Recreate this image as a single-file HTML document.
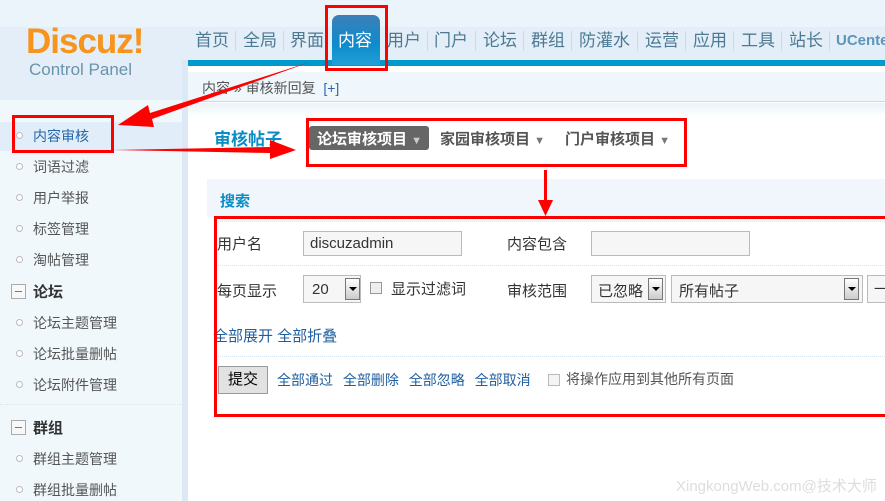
<!DOCTYPE html>
<html><head><meta charset="utf-8"><style>
*{margin:0;padding:0;box-sizing:border-box}
body{width:885px;height:501px;overflow:hidden;position:relative;background:#fff;font-family:"Liberation Sans","Noto Sans CJK SC",sans-serif;font-size:14px;color:#333}
.a{position:absolute;white-space:nowrap}
.nav{top:29px;font-size:17px;color:#4d7a92;height:24px;line-height:24px}
.sep{position:absolute;top:31px;width:1px;height:20px;background:#c8dbe6}
.si{position:absolute;left:33px;font-size:14px;color:#555}
.dot{position:absolute;left:16px;width:7px;height:7px;border:1px solid #bbb;border-radius:50%;background:#fff}
.hd{position:absolute;left:11px;width:15px;height:15px;border:1px solid #aaa;background:#f8f8f8}
.hd:after{content:"";position:absolute;left:3px;top:6px;width:7px;height:1px;background:#777}
.lk{color:#1f5fa0}
.inp{position:absolute;border:1px solid #bbb;background:#f6f6f6;height:25px}
.dd{position:absolute;width:15px;height:20px;border:1px solid #777;background:linear-gradient(#fff,#ccc);top:2px}
.dd:after{content:"";position:absolute;left:3px;top:8px;border:4px solid transparent;border-top:4px solid #000}
.red{position:absolute;border:3px solid #f00}
</style></head><body>
<!-- header -->
<div class="a" style="left:0;top:0;width:885px;height:60px;background:#ecf4fb"></div>
<div class="a" style="left:0;top:27px;width:885px;height:33px;background:#e3eef8"></div>
<div class="a" style="left:0;top:60px;width:182px;height:40px;background:#e3eef8"></div>
<div class="a" style="left:26px;top:22px;font-size:35px;font-weight:bold;color:#f7941d;letter-spacing:-1px">Discuz!</div>
<div class="a" style="left:29px;top:60px;font-size:17px;color:#6a94ab">Control Panel</div>
<div class="a" style="left:188px;top:60px;width:697px;height:6px;background:#0099cc"></div>
<div class="a" style="left:332px;top:15px;width:48px;height:50px;border-radius:7px 7px 0 0;background:linear-gradient(#3c80b8,#0d8bcb 60%,#22a0d8)"></div>
<div class="a nav" style="left:338px;color:#fff">内容</div>
<div class="a nav" style="left:195px">首页</div><div class="sep" style="left:235px"></div>
<div class="a nav" style="left:243px">全局</div><div class="sep" style="left:283px"></div>
<div class="a nav" style="left:290px">界面</div>
<div class="a nav" style="left:387px">用户</div><div class="sep" style="left:427px"></div>
<div class="a nav" style="left:434px">门户</div><div class="sep" style="left:475px"></div>
<div class="a nav" style="left:483px">论坛</div><div class="sep" style="left:523px"></div>
<div class="a nav" style="left:531px">群组</div><div class="sep" style="left:571px"></div>
<div class="a nav" style="left:579px">防灌水</div><div class="sep" style="left:637px"></div>
<div class="a nav" style="left:645px">运营</div><div class="sep" style="left:685px"></div>
<div class="a nav" style="left:693px">应用</div><div class="sep" style="left:733px"></div>
<div class="a nav" style="left:741px">工具</div><div class="sep" style="left:781px"></div>
<div class="a nav" style="left:789px">站长</div><div class="sep" style="left:829px"></div>
<div class="a nav" style="left:836px;font-size:15px;font-weight:bold;color:#5d95b8">UCenter</div>
<!-- breadcrumb -->
<div class="a" style="left:188px;top:72px;width:697px;height:30px;background:#f0f7fc;border-bottom:1px solid #c6d8e2"></div>
<div class="a" style="left:188px;top:103px;width:697px;height:14px;background:linear-gradient(#eaf2f8,#fff)"></div>
<div class="a" style="left:202px;top:78px;font-size:14px;color:#555">内容 » 审核新回复 &nbsp;<span style="color:#2a67b1">[+]</span></div>
<!-- sidebar -->
<div class="a" style="left:0;top:100px;width:182px;height:401px;background:#f1f8fc"></div>
<div class="a" style="left:182px;top:60px;width:6px;height:441px;background:#dce9f5"></div>
<div class="a" style="left:0;top:122px;width:182px;height:29px;background:#e1eef9"></div>
<div class="dot" style="top:132px"></div><div class="si" style="top:126px;color:#2466a8">内容审核</div>
<div class="dot" style="top:163px"></div><div class="si" style="top:157px">词语过滤</div>
<div class="dot" style="top:194px"></div><div class="si" style="top:188px">用户举报</div>
<div class="dot" style="top:225px"></div><div class="si" style="top:219px">标签管理</div>
<div class="dot" style="top:256px"></div><div class="si" style="top:250px">淘帖管理</div>
<div class="hd" style="top:284px"></div><div class="si" style="top:281px;font-weight:bold;font-size:15px;color:#333">论坛</div>
<div class="dot" style="top:319px"></div><div class="si" style="top:313px">论坛主题管理</div>
<div class="dot" style="top:350px"></div><div class="si" style="top:344px">论坛批量删帖</div>
<div class="dot" style="top:381px"></div><div class="si" style="top:375px">论坛附件管理</div>
<div class="a" style="left:0;top:404px;width:182px;border-top:1px dotted #d5e5f0"></div>
<div class="hd" style="top:420px"></div><div class="si" style="top:417px;font-weight:bold;font-size:15px;color:#333">群组</div>
<div class="dot" style="top:455px"></div><div class="si" style="top:449px">群组主题管理</div>
<div class="dot" style="top:486px"></div><div class="si" style="top:480px">群组批量删帖</div>
<!-- title & tabs -->
<div class="a" style="left:214px;top:125px;font-size:17px;font-weight:bold;color:#0a8cc4">审核帖子</div>
<div class="a" style="left:309px;top:126px;width:120px;height:24px;background:#666;border-radius:3px"></div>
<div class="a" style="left:317px;top:128px;font-size:15px;font-weight:bold;color:#fff">论坛审核项目 <span style="font-size:11px;color:#ccc">▼</span></div>
<div class="a" style="left:440px;top:128px;font-size:15px;font-weight:bold;color:#555">家园审核项目 <span style="font-size:11px;color:#777">▼</span></div>
<div class="a" style="left:565px;top:128px;font-size:15px;font-weight:bold;color:#555">门户审核项目 <span style="font-size:11px;color:#777">▼</span></div>
<!-- search -->
<div class="a" style="left:207px;top:179px;width:678px;height:38px;background:#f0f6fc"></div>
<div class="a" style="left:220px;top:190px;font-size:15px;font-weight:bold;color:#0a8cc4">搜索</div>
<div class="a" style="left:216px;top:221px;width:669px;border-top:1px dotted #d3e6f2"></div>
<div class="a" style="left:216px;top:265px;width:669px;border-top:1px dotted #d3e6f2"></div>
<div class="a" style="left:216px;top:356px;width:669px;border-top:1px dotted #d3e6f2"></div>
<div class="a" style="left:217px;top:233px;font-size:15px">用户名</div>
<div class="inp" style="left:303px;top:231px;width:159px"></div>
<div class="a" style="left:310px;top:235px;font-size:15px;color:#333">discuzadmin</div>
<div class="a" style="left:507px;top:233px;font-size:15px">内容包含</div>
<div class="inp" style="left:591px;top:231px;width:159px"></div>
<div class="a" style="left:217px;top:280px;font-size:15px">每页显示</div>
<div class="inp" style="left:303px;top:275px;width:58px;height:28px"><span class="a" style="left:8px;top:5px;font-size:15px">20</span><div class="dd" style="left:41px;height:22px"></div></div>
<div class="a" style="left:370px;top:282px;width:12px;height:12px;border:1px solid #999;background:#eee"></div>
<div class="a" style="left:391px;top:278px;font-size:15px">显示过滤词</div>
<div class="a" style="left:507px;top:280px;font-size:15px">审核范围</div>
<div class="inp" style="left:591px;top:275px;width:75px;height:28px"><span class="a" style="left:6px;top:4px;font-size:15px">已忽略</span><div class="dd" style="left:56px;height:22px"></div></div>
<div class="inp" style="left:671px;top:275px;width:192px;height:28px"><span class="a" style="left:7px;top:4px;font-size:15px">所有帖子</span><div class="dd" style="left:172px;height:22px"></div></div>
<div class="inp" style="left:867px;top:275px;width:30px;height:28px"><span class="a" style="left:6px;top:3px">一</span></div>
<div class="a lk" style="left:213px;top:325px;font-size:15px">全部展开 全部折叠</div>
<div class="a" style="left:218px;top:366px;width:50px;height:28px;border:1px solid #999;background:#e2e2e2;font-size:15px;line-height:26px;text-align:center;color:#000">提交</div>
<div class="a lk" style="left:277px;top:370px;font-size:14px;word-spacing:6px">全部通过 全部删除 全部忽略 全部取消</div>
<div class="a" style="left:548px;top:374px;width:12px;height:12px;border:1px solid #bbb;background:#f4f4f4"></div>
<div class="a" style="left:566px;top:369px;font-size:14px;color:#555">将操作应用到其他所有页面</div>
<div class="a" style="left:676px;top:475px;font-size:15px;color:#ddd">XingkongWeb.com@技术大师</div>
<!-- red annotations -->
<div class="red" style="left:325px;top:5px;width:63px;height:66px"></div>
<div class="red" style="left:12px;top:115px;width:102px;height:38px"></div>
<div class="red" style="left:306px;top:118px;width:381px;height:49px"></div>
<div class="red" style="left:214px;top:216px;width:680px;height:201px;border-right:none"></div>
<svg class="a" style="left:0;top:0" width="885" height="501">
<path d="M310 62 L150 113 L148 105 L118 125 L154 127 L152 119 Z" fill="#f00"/>
<path d="M113 150 L270 147 L270 140 L296 150 L270 159 L270 153 Z" fill="#f00"/>
<path d="M544 170 L547 170 L547 200 L553 200 L545.5 216 L538 200 L544 200 Z" fill="#f00"/>
</svg>
</body></html>
